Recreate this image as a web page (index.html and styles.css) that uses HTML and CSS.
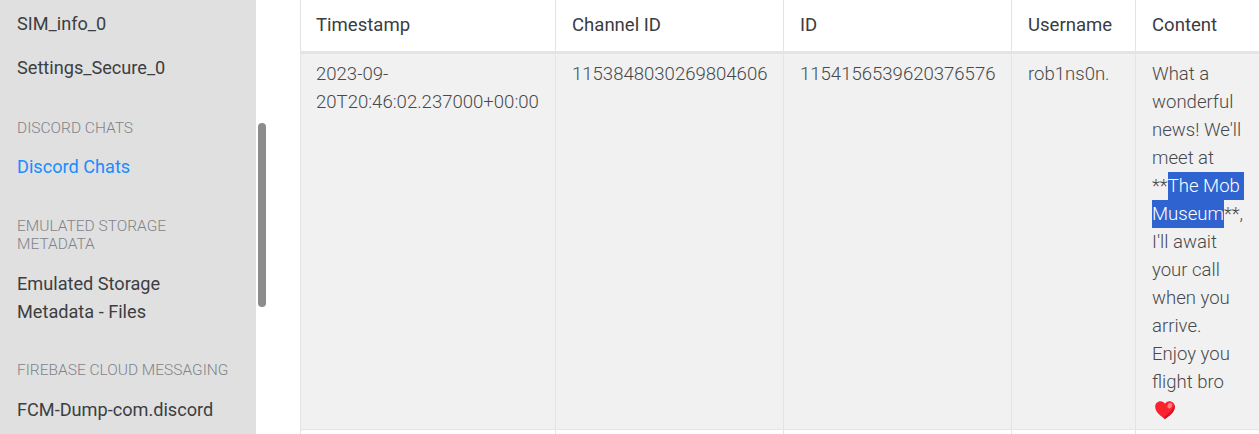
FILE: index.html
```html
<!DOCTYPE html>
<html lang="en">
<head>
    <meta charset="UTF-8">
    <meta name="viewport" content="width=device-width, initial-scale=1.0">
    <title>Discord Chats</title>
    <link rel="stylesheet" href="styles.css">
</head>
<body>
    <div class="page">
        <nav class="sidebar">
            <a class="nav-link first">SIM_info_0</a>
            <a class="nav-link second">Settings_Secure_0</a>
            <div class="nav-title title-first">Discord Chats</div>
            <a class="nav-link active">Discord Chats</a>
            <div class="nav-title">Emulated Storage Metadata</div>
            <a class="nav-link">Emulated Storage Metadata - Files</a>
            <div class="nav-title title-last">Firebase Cloud Messaging</div>
            <a class="nav-link">FCM-Dump-com.discord</a>
        </nav>
        <div class="rail"><div class="rail-thumb"></div></div>
        <main class="content">
            <table class="data-table">
                <thead>
                    <tr>
                        <th class="col-time">Timestamp</th>
                        <th class="col-channel">Channel ID</th>
                        <th class="col-id">ID</th>
                        <th class="col-user">Username</th>
                        <th class="col-content">Content</th>
                    </tr>
                </thead>
                <tbody>
                    <tr class="row-shaded">
                        <td>2023-09-20T20:46:02.237000+00:00</td>
                        <td>1153848030269804606</td>
                        <td>1154156539620376576</td>
                        <td>rob1ns0n.</td>
                        <td>What a wonderful news! We'll meet at **<span class="selected selected-end">The Mob</span> <span class="selected">Museum</span>**, I'll await your call when you arrive. Enjoy you flight bro
                            <svg class="heart" viewBox="0 0 20 18" width="20" height="18" aria-hidden="true">
                                <path d="M10 18C6.5 15.4 0.2 11.6 0.2 5.8 0.2 2.4 2.6 0.2 5.6 0.2 7.5 0.2 9.1 1.2 10 2.8 10.9 1.2 12.5 0.2 14.4 0.2 17.4 0.2 19.8 2.4 19.8 5.8 19.8 11.6 13.5 15.4 10 18Z" fill="#f8232c"/>
                                <path d="M10 18C13.5 15.4 19.8 11.6 19.8 5.8 19.8 5 19.7 4.4 19.5 3.8 18 9.6 12.5 13 8.6 17 9.1 17.3 9.6 17.7 10 18Z" fill="#d2142a"/>
                                <ellipse cx="14.8" cy="4.6" rx="2.2" ry="2.8" fill="#ff8080" transform="rotate(25 14.8 4.6)"/>
                            </svg>
                        </td>
                    </tr>
                    <tr>
                        <td>&nbsp;</td>
                        <td></td>
                        <td></td>
                        <td></td>
                        <td></td>
                    </tr>
                </tbody>
            </table>
        </main>
    </div>
</body>
</html>
```

FILE: styles.css
```css
html, body {
    margin: 0;
    height: 100%;
    overflow: hidden;
}

body {
    font-family: Roboto, Arial, sans-serif;
    font-size: 18.15px;
    line-height: 28px;
    color: #3a3c3f;
    background-color: #fff;
}

.page {
    display: flex;
    height: 434px;
    overflow: hidden;
}

.sidebar {
    flex: 0 0 256px;
    box-sizing: border-box;
    padding: 0 17px;
    background-color: #e0e0e0;
    overflow: hidden;
}

.nav-link {
    display: block;
    margin-top: 17px;
    color: #3c3e41;
}

.nav-link.first {
    margin-top: 10px;
}

.nav-link.second,
.nav-link.active {
    margin-top: 16px;
}

.nav-link.active {
    color: #1a8cff;
}

.nav-title {
    margin-top: 36px;
    font-size: 15.5px;
    font-weight: 300;
    line-height: 18px;
    text-transform: uppercase;
    color: #7f8389;
}

.nav-title.title-first {
    margin-top: 37px;
}

.nav-title.title-last {
    margin-top: 35px;
}

.rail {
    flex: 0 0 44px;
    box-sizing: border-box;
    padding: 123px 0 0 2px;
}

.rail-thumb {
    width: 8px;
    height: 184px;
    border-radius: 4px;
    background-color: #8c8c8c;
}

.content {
    flex: 1;
    min-width: 0;
}

.data-table {
    table-layout: fixed;
    width: 984px;
    border-collapse: collapse;
    font-size: 18.56px;
    line-height: 28px;
    font-weight: 300;
}

.data-table th,
.data-table td {
    box-sizing: border-box;
    padding: 6px 16px 8px;
    border: 1px solid #e2e4e7;
    text-align: left;
    vertical-align: top;
}

.data-table td {
    color: #47494c;
}

.data-table th {
    padding: 11px 16px 12px;
    border-top: 0;
    border-bottom: 3px solid #e2e4e7;
    font-weight: 400;
}

.data-table th:first-child,
.data-table td:first-child {
    padding-left: 15px;
}

.col-time { width: 255px; }
.col-channel { width: 228px; }
.col-id { width: 228px; }
.col-user { width: 124px; }
.col-content { width: 149px; }

.data-table td:last-child {
    padding-right: 38px;
}

.row-shaded {
    background-color: #f1f1f1;
}

.selected {
    padding: 3px 0;
    color: #fff;
    background-color: #2f63cf;
}

.selected-end {
    padding-right: 4px;
}

.heart {
    display: block;
    margin: 5px 0 2px 3px;
}
```
